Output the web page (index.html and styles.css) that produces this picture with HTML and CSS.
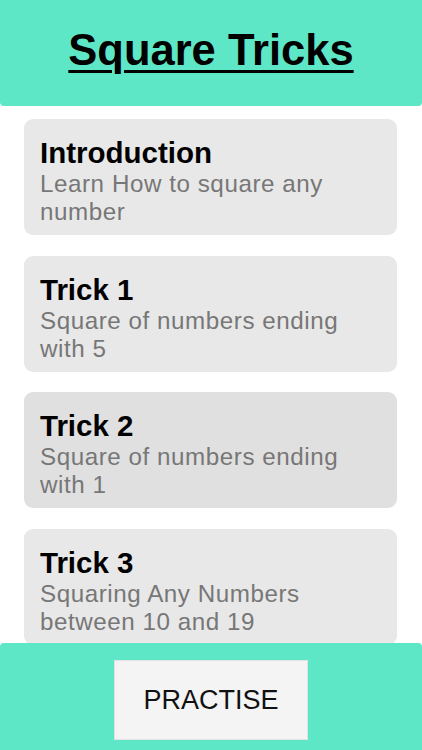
FILE: index.html
```html
<!DOCTYPE html>
<html>
<head>
<meta charset="utf-8">
<link rel="stylesheet" href="styles.css">
</head>
<body>
<div class="app">
  <header class="header">
    <h1 class="title">Square Tricks</h1>
  </header>
  <main class="list">
    <div class="card">
      <div class="card-title">Introduction</div>
      <div class="card-sub">Learn How to square any number</div>
    </div>
    <div class="card">
      <div class="card-title">Trick 1</div>
      <div class="card-sub">Square of numbers ending with 5</div>
    </div>
    <div class="card card-active">
      <div class="card-title">Trick 2</div>
      <div class="card-sub">Square of numbers ending with 1</div>
    </div>
    <div class="card">
      <div class="card-title">Trick 3</div>
      <div class="card-sub">Squaring Any Numbers between 10 and 19</div>
    </div>
  </main>
  <footer class="footer">
    <button class="practise">PRACTISE</button>
  </footer>
</div>
</body>
</html>
```
FILE: styles.css
```css
html, body {
  margin: 0;
  padding: 0;
  background: #ffffff;
}
body {
  font-family: "Liberation Sans", Arial, sans-serif;
}
.app {
  width: 422px;
  height: 750px;
  display: flex;
  flex-direction: column;
  overflow: hidden;
}
.header {
  height: 106px;
  flex: 0 0 106px;
  background: #5de7c6;
  border-radius: 0 0 4px 4px;
  display: flex;
  justify-content: center;
}
.title {
  margin: 0;
  padding-top: 26px;
  font-size: 43.5px;
  line-height: 48px;
  font-weight: bold;
  color: #000;
  text-decoration: underline;
  text-decoration-thickness: 3px;
  text-underline-offset: 5px;
}
.list {
  flex: 1 1 auto;
  overflow: hidden;
  display: flex;
  flex-direction: column;
  gap: 20.7px;
  padding: 13px 25px 0 24px;
}
.card {
  flex: 0 0 auto;
  background: #e8e8e8;
  border-radius: 9px;
  padding: 17px 16px 9px 16px;
}
.card-active {
  background: #e0e0e0;
}
.card-title {
  font-size: 29.5px;
  line-height: 34px;
  font-weight: bold;
  color: #000;
}
.card-sub {
  font-size: 24.2px;
  letter-spacing: 0.55px;
  line-height: 28px;
  color: #777777;
}
.footer {
  flex: 0 0 107px;
  height: 107px;
  background: #5de7c6;
  border-radius: 4px 4px 0 0;
  display: flex;
  justify-content: center;
  padding-top: 17px;
  box-sizing: border-box;
}
.practise {
  width: 194px;
  height: 80px;
  background: #f4f4f4;
  border: 1px solid #e2e2e2;
  border-radius: 0;
  font-family: "Liberation Sans", Arial, sans-serif;
  font-size: 27px;
  color: #111;
  padding: 0;
}
```
